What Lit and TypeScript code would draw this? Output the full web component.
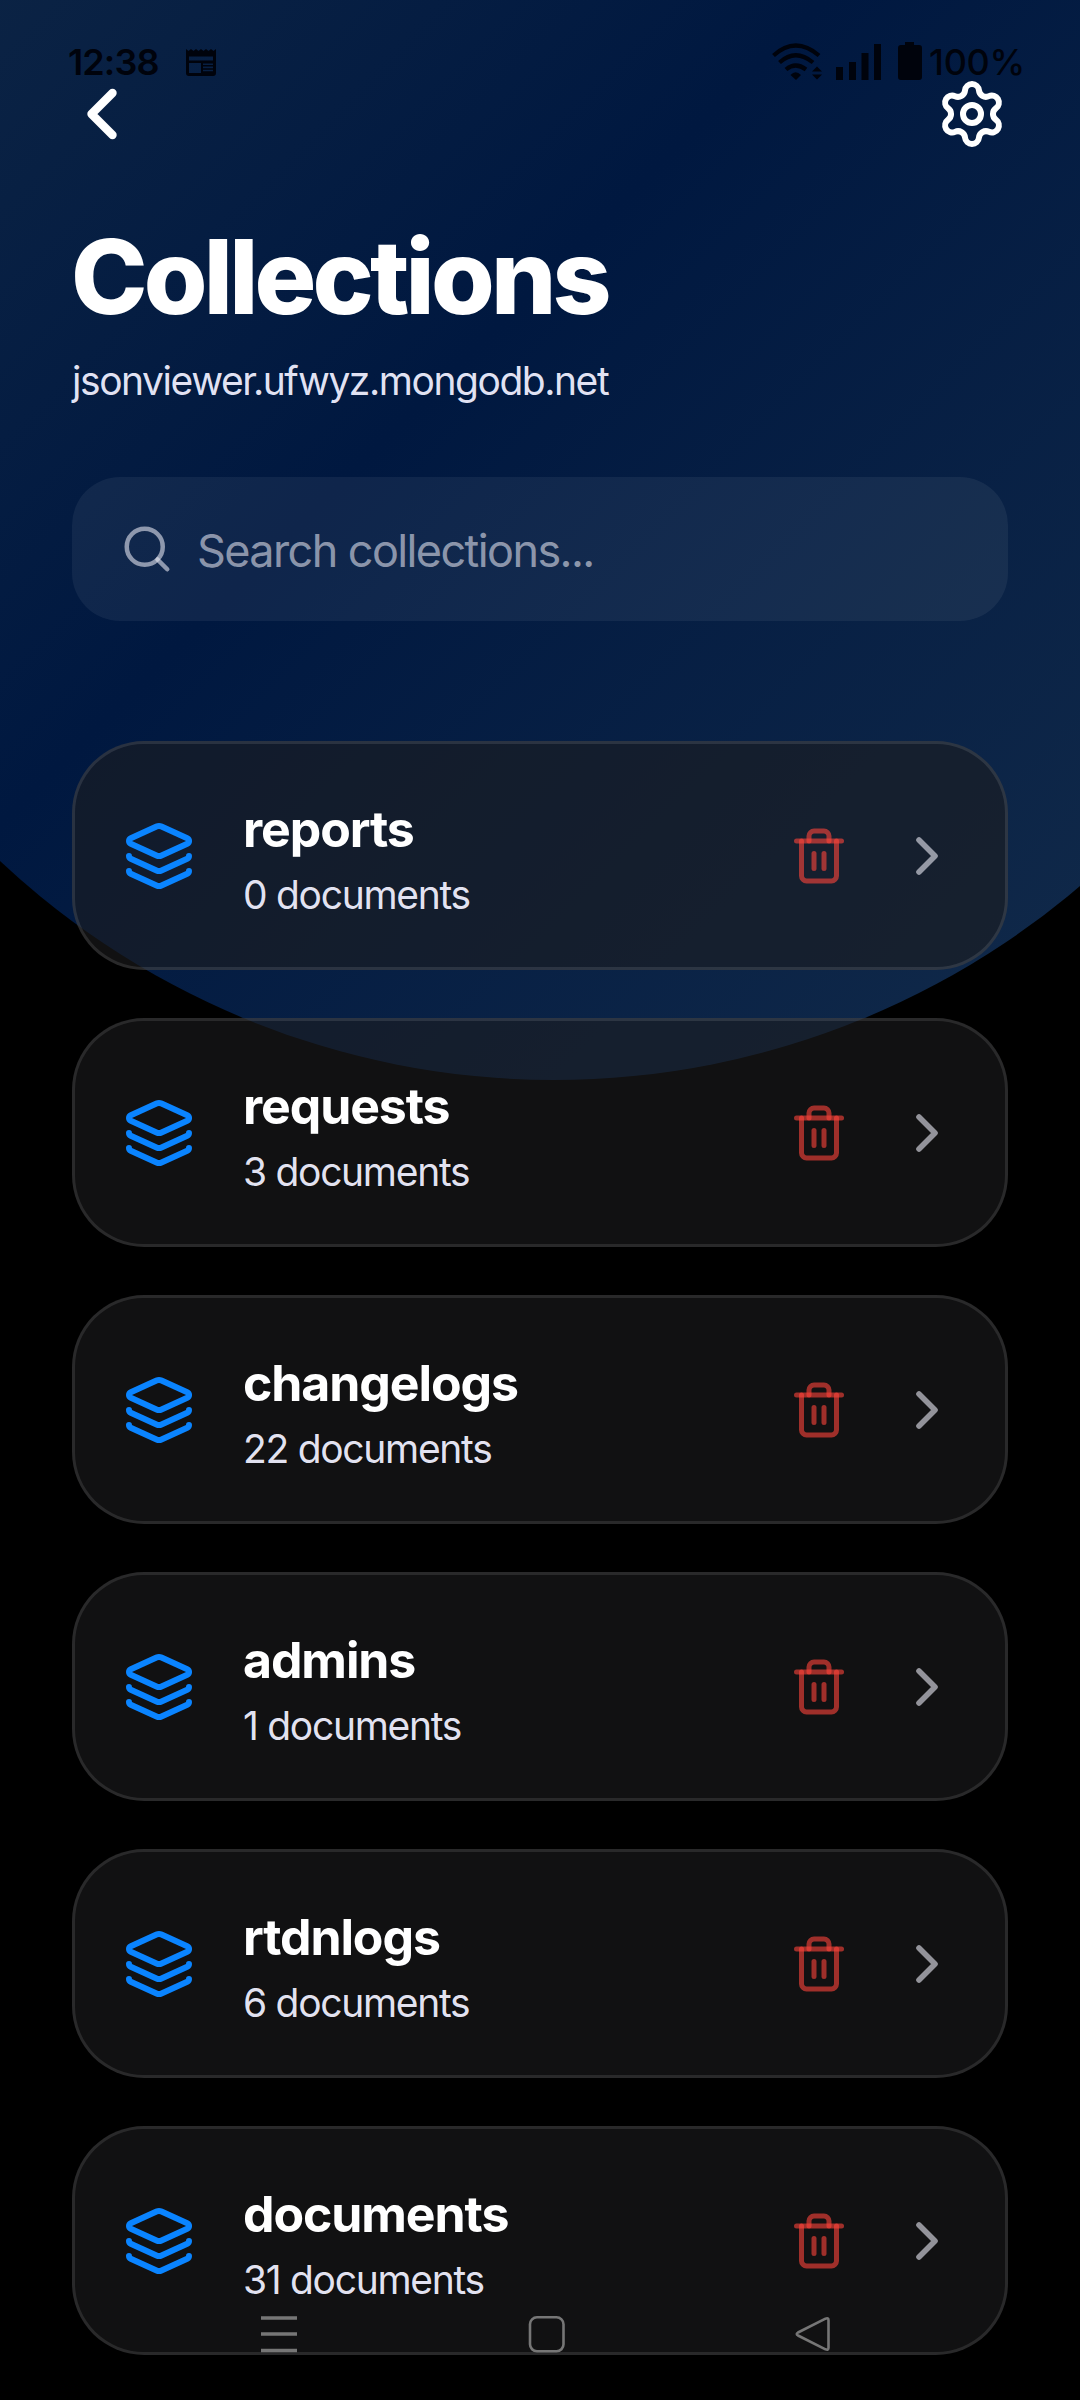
import { LitElement, html, css, svg } from "lit";
import { customElement, property } from "lit/decorators.js";

interface Collection {
  name: string;
  count: number;
}

const COLLECTIONS: Collection[] = [
  { name: "reports", count: 0 },
  { name: "requests", count: 3 },
  { name: "changelogs", count: 22 },
  { name: "admins", count: 1 },
  { name: "rtdnlogs", count: 6 },
  { name: "documents", count: 31 },
];

const ICONS = {
  back: svg`<path d="m15 18-6-6 6-6"/>`,
  next: svg`<path d="m9 18 6-6-6-6"/>`,
  search: svg`<path d="m21 21-4.34-4.34"/><circle cx="11" cy="11" r="8"/>`,
  settings: svg`<path d="M9.671 4.136a2.34 2.34 0 0 1 4.659 0 2.34 2.34 0 0 0 3.319 1.915 2.34 2.34 0 0 1 2.33 4.033 2.34 2.34 0 0 0 0 3.831 2.34 2.34 0 0 1-2.33 4.033 2.34 2.34 0 0 0-3.319 1.915 2.34 2.34 0 0 1-4.659 0 2.34 2.34 0 0 0-3.32-1.915 2.34 2.34 0 0 1-2.33-4.033 2.34 2.34 0 0 0 0-3.831A2.34 2.34 0 0 1 6.35 6.051a2.34 2.34 0 0 0 3.319-1.915"/><circle cx="12" cy="12" r="3"/>`,
  layers: svg`<path d="M12.83 2.18a2 2 0 0 0-1.66 0L2.6 6.08a1 1 0 0 0 0 1.83l8.58 3.91a2 2 0 0 0 1.66 0l8.58-3.9a1 1 0 0 0 0-1.83z"/><path d="M2 12a1 1 0 0 0 .58.91l8.6 3.91a2 2 0 0 0 1.65 0l8.58-3.9A1 1 0 0 0 22 12"/><path d="M2 17a1 1 0 0 0 .58.91l8.6 3.91a2 2 0 0 0 1.65 0l8.58-3.9A1 1 0 0 0 22 17"/>`,
  trash: svg`<path d="M3 6h18"/><path d="M19 6v14c0 1-1 2-2 2H7c-1 0-2-1-2-2V6"/><path d="M8 6V4c0-1 1-2 2-2h4c1 0 2 1 2 2v2"/><path d="M10 11v6"/><path d="M14 11v6"/>`,
};

@customElement("line-icon")
class LineIcon extends LitElement {
  @property() name: keyof typeof ICONS = "next";
  static styles = css`
    :host { display: block; flex: none; }
    .glyph {
      display: block; width: 100%; height: 100%; overflow: visible;
      fill: none; stroke: currentColor; stroke-width: var(--stroke, 2);
      stroke-linecap: round; stroke-linejoin: round;
    }
  `;
  render() {
    return html`<svg class="glyph" viewBox="0 0 24 24">${ICONS[this.name]}</svg>`;
  }
}

@customElement("status-bar")
class StatusBar extends LitElement {
  static styles = css`
    :host {
      position: absolute; top: 0; left: 0; right: 0; height: 84px;
      color: #00030c; font: 600 36px/44px Inter, sans-serif;
    }
    .row { display: flex; padding: 40px 53px 0 68px; }
    .time { width: 118px; letter-spacing: -0.9px; }
    .news { width: 30px; height: 30px; margin-top: 8px; }
    .spacer { flex: 1; }
    .signals { width: 154px; height: 42px; }
    .level { width: 98px; letter-spacing: -0.3px; margin-left: 4px; white-space: nowrap; font-weight: 500; }
  `;
  render() {
    return html`<div class="row">
      <span class="time">12:38</span>
      <svg class="news" viewBox="0 0 30 30" fill="currentColor">
        <path fill-rule="evenodd" d="M0 1l2.5 2L5 1l2.5 2L10 1l2.500 2L15 1l2.500 2L20 1l2.500 2L25 1l2.500 2L30 1v24q0 3-3 3H3q-3 0-3-3zM3 8.500v4h24v-4zM3 15v10h12V15zM17 15.500v1.600h10v-1.600zM17 18.600v1.600h10v-1.600zM17 21.700v1.600h10v-1.600z"/>
      </svg>
      <span class="spacer"></span>
      <svg class="signals" viewBox="0 0 154 42" fill="currentColor">
        <g fill="none" stroke="currentColor" stroke-width="4.200">
          <path d="M2.500 15.500Q24.500-4.500 48 15.500"/>
          <path d="M8.500 22.500Q24.500 8 42 22.500"/>
          <path d="M15 29.500Q24.500 21.500 35 29.500"/>
        </g>
        <path d="M19.500 35Q24.500 29.500 30 35L25 40z"/>
        <path d="M41 31.500l5-5 5 5zM41 34.500l5 5 5-5z"/>
        <path d="M65 27h7v13h-7zM78 22h7v18h-7zM90.500 13h7v27h-7zM103 4h7v36h-7z"/>
        <path d="M134 2h9v3h5q3 0 3 3v29q0 3-3 3h-18q-3 0-3-3V8q0-3 3-3h4z"/>
      </svg>
      <span class="level">100%</span>
    </div>`;
  }
}

@customElement("nav-bar")
class NavBar extends LitElement {
  static styles = css`
    :host { position: absolute; left: 0; right: 0; top: 2310px; height: 48px; color: #767676; }
    .row { display: flex; justify-content: space-between; padding: 0 243px 0 255px; }
    .key { width: 48px; height: 48px; fill: none; stroke: currentColor; }
  `;
  render() {
    return html`<div class="row">
      <svg class="key" viewBox="0 0 48 48" stroke-width="3.400"><path d="M6 8h36M6 24h36M6 40.500h36"/></svg>
      <svg class="key" viewBox="0 0 48 48" stroke-width="2.600"><rect x="8" y="7.300" width="33.500" height="34" rx="7"/></svg>
      <svg class="key" viewBox="0 0 48 48" stroke-width="2.600" stroke-linejoin="round"><path d="M9 22.500L36.500 8.700q3-1.200 3 1.500v27.600q0 2.700-3 1.500L9 25.500q-2.500-1.500 0-3z"/></svg>
    </div>`;
  }
}

@customElement("collection-card")
class CollectionCard extends LitElement {
  @property({ attribute: false }) item!: Collection;
  static styles = css`
    :host { display: block; }
    .card {
      box-sizing: border-box; height: 229px; display: flex; align-items: center;
      padding: 0 46px 0 48px; border: 3px solid rgba(255, 255, 255, 0.1);
      border-radius: 72px; background: rgba(28, 28, 30, 0.6);
    }
    .layers { width: 72px; height: 72px; color: #0a84ff; }
    .text { flex: 1; margin-left: 48px; display: flex; flex-direction: column; gap: 7px; }
    .name { font-size: 50px; line-height: 71px; font-weight: 700; color: #fff; letter-spacing: -1.1px; }
    .count { font-size: 39px; line-height: 46px; color: rgba(240, 240, 255, 0.95); letter-spacing: -1.3px; }
    .trash { width: 60px; height: 60px; color: rgba(255, 69, 58, 0.6); }
    .next { width: 64px; height: 64px; margin-left: 46px; color: rgba(235, 235, 245, 0.6); --stroke: 2.1; }
  `;
  render() {
    return html`<div class="card">
      <line-icon class="layers" name="layers"></line-icon>
      <div class="text">
        <span class="name">${this.item.name}</span>
        <span class="count">${this.item.count} documents</span>
      </div>
      <line-icon class="trash" name="trash"></line-icon>
      <line-icon class="next" name="next"></line-icon>
    </div>`;
  }
}

@customElement("app-root")
class AppRoot extends LitElement {
  static styles = css`
    :host {
      display: block; position: relative; width: 1080px; height: 2400px;
      overflow: hidden; background: #000; color: #fff;
      font-family: Inter, "Liberation Sans", sans-serif;
    }
    .orb {
      position: absolute; left: -256px; top: -540px; width: 1620px; height: 1620px;
      border-radius: 50%;
      background: linear-gradient(135deg, #152d48 0%, #001840 50%, #152e4c 100%);
    }
    .page { position: relative; display: flex; flex-direction: column; padding: 72px 72px 0; }
    .bar { display: flex; justify-content: space-between; align-items: center; height: 84px; margin-left: -12px; }
    .back { width: 84px; height: 84px; --stroke: 2.4; }
    .gear { width: 72px; height: 72px; }
    .title { margin: 59px 0 0 -1px; font-size: 103px; line-height: 124px; font-weight: 800; letter-spacing: -3.8px; }
    .host { margin: 14px 0 0; font-size: 39px; line-height: 56px; color: rgba(240, 240, 255, 0.95); letter-spacing: -1.45px; }
    .search {
      margin-top: 68px; height: 144px; box-sizing: border-box; padding: 0 48px;
      display: flex; align-items: center; gap: 23px; border-radius: 48px;
      background: rgba(255, 255, 255, 0.06); color: rgba(235, 235, 245, 0.58);
      font-size: 45px; letter-spacing: -1.6px;
    }
    .hint { padding-top: 2px; }
    .lens { width: 54px; height: 54px; }
    .list { display: flex; flex-direction: column; gap: 48px; margin-top: 120px; }
  `;
  render() {
    return html`
      <div class="orb"></div>
      <main class="page">
        <div class="bar">
          <line-icon class="back" name="back"></line-icon>
          <line-icon class="gear" name="settings"></line-icon>
        </div>
        <h1 class="title">Collections</h1>
        <p class="host">jsonviewer.ufwyz.mongodb.net</p>
        <div class="search">
          <line-icon class="lens" name="search"></line-icon>
          <span class="hint">Search collections...</span>
        </div>
        <div class="list">
          ${COLLECTIONS.map((c) => html`<collection-card .item=${c}></collection-card>`)}
        </div>
      </main>
      <status-bar></status-bar>
      <nav-bar></nav-bar>
    `;
  }
}
